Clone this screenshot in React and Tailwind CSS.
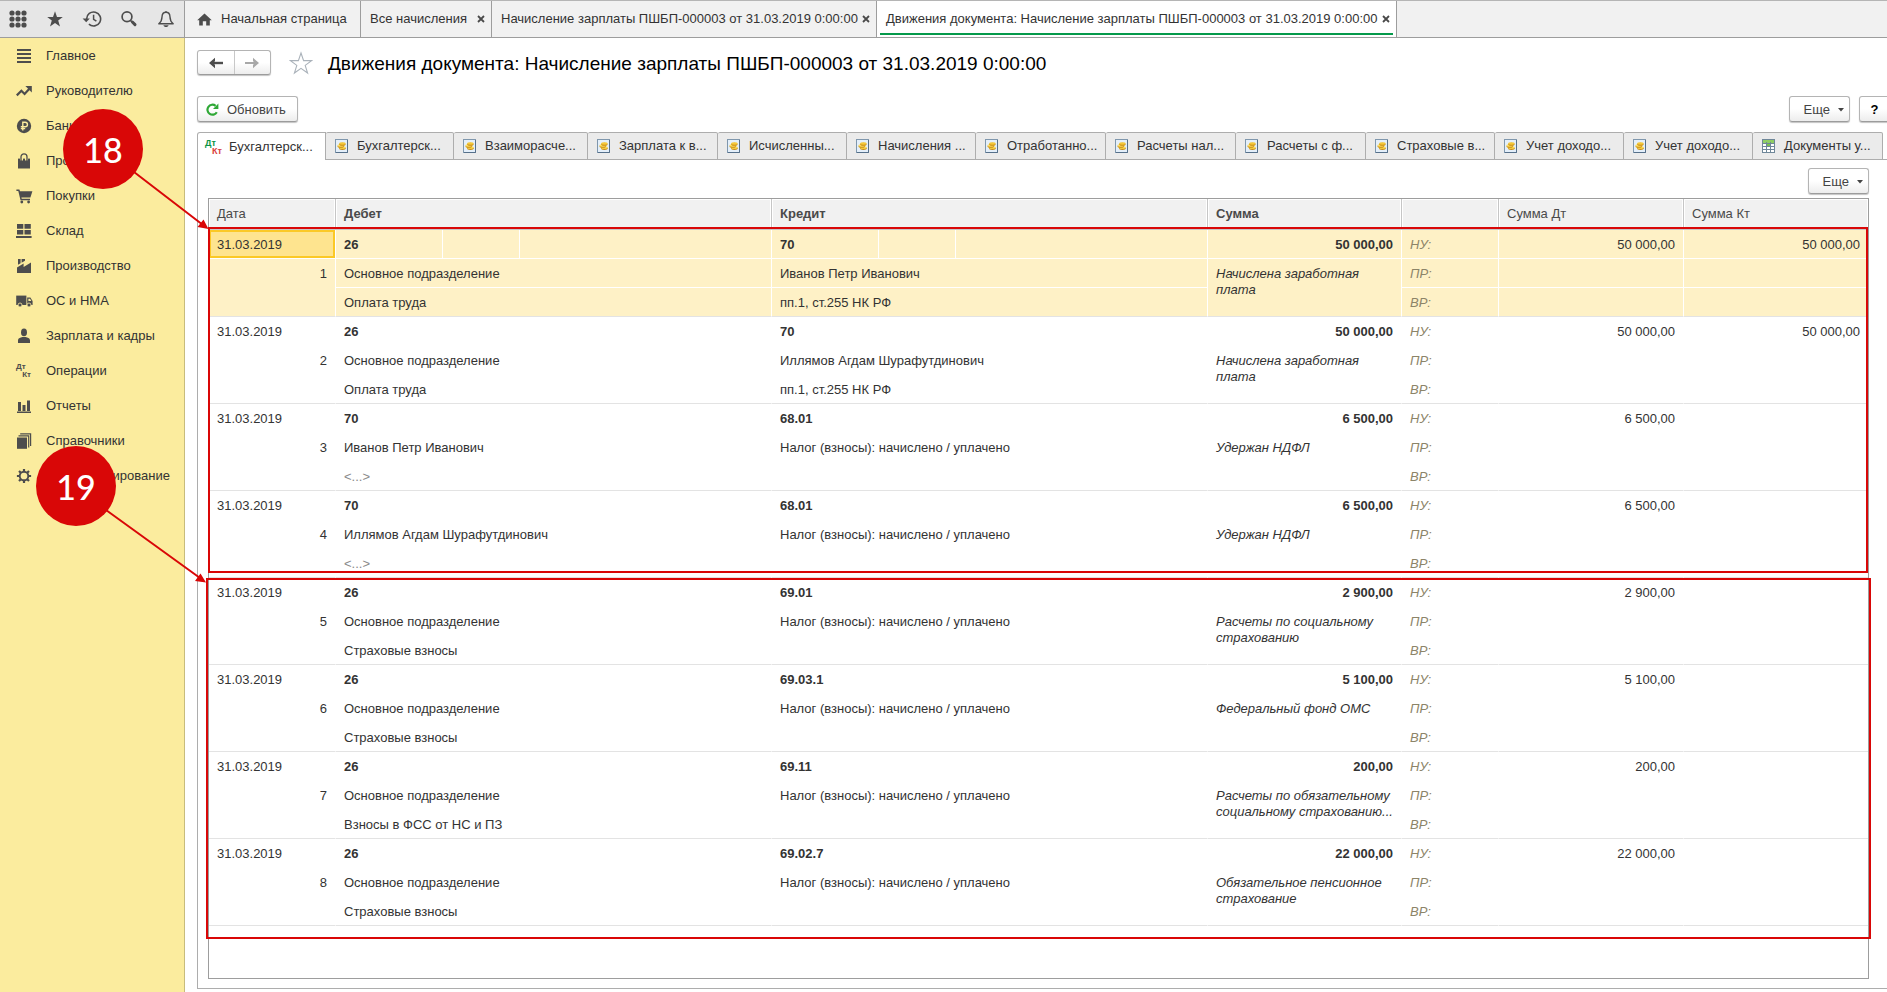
const ink = "#4d4d4d";

function Svg({ w, h, box, className, children }) {
  return (
    <svg
      width={w}
      height={h}
      viewBox={box || `0 0 ${w} ${h}`}
      fill="none"
      aria-hidden="true"
      className={className || "shrink-0"}
    >
      {children}
    </svg>
  );
}

const AppsIcon = () => (
  <Svg w={18} h={18}>
    {[3, 9, 15].map((y) =>
      [3, 9, 15].map((x) => <circle key={`${x}-${y}`} cx={x} cy={y} r="2.6" fill={ink} />)
    )}
  </Svg>
);

const FavoritesIcon = () => (
  <Svg w={18} h={18}>
    <path d="M9 1.2l2 5.7h5.8l-4.6 3.6 1.8 6L9 12.9l-5 3.6 1.8-6L1.2 6.9H7z" fill={ink} />
  </Svg>
);

const HistoryIcon = () => (
  <Svg w={20} h={18}>
    <path d="M4.6 9a7 7 0 1 1 2.3 5.2" stroke={ink} strokeWidth="1.6" />
    <path d="M.6 8.4h7.2L4.2 12.2z" fill={ink} />
    <path d="M11.6 4.8v4.6l2.8 1.8" stroke={ink} strokeWidth="1.5" />
  </Svg>
);

const SearchIcon = () => (
  <Svg w={18} h={18}>
    <circle cx="7" cy="6.8" r="4.9" stroke={ink} strokeWidth="1.7" />
    <path d="M10.4 10.4l1.6 1.6" stroke={ink} strokeWidth="1.5" />
    <path d="M12.400 12l2.600 2.600" stroke={ink} strokeWidth="3" strokeLinecap="round" />
  </Svg>
);

const BellIcon = () => (
  <Svg w={18} h={18}>
    <path
      d="M9 .9v1.4M9 2.2c-2.6 0-3.9 1.9-4 4.800-.1 3.600-1 5-3.200 6.800h14.400c-2.200-1.800-3.100-3.200-3.200-6.800-.1-2.900-1.400-4.800-4-4.800z"
      stroke={ink}
      strokeWidth="1.4"
      strokeLinejoin="round"
    />
    <path d="M6.400 15.200h5.200c-.4 1.200-1.200 1.800-2.600 1.800s-2.200-.6-2.600-1.800z" fill={ink} />
  </Svg>
);

const HomeIcon = () => (
  <Svg w={15} h={13}>
    <path d="M7.500.4L14.800 7.200H12.800V12.600H9.200V8.200H5.800V12.600H2.200V7.200H.2z" fill={ink} />
  </Svg>
);

const navIcons = {
  main: (
    <Svg w={16} h={16}>
      <path d="M1 2h14M1 6h14M1 10h14M1 14h14" stroke={ink} strokeWidth="2" />
    </Svg>
  ),
  trend: (
    <Svg w={16} h={16}>
      <path d="M.8 12.400l4.600-4.600 3.200 3.200 5-5.400" stroke={ink} strokeWidth="2.200" />
      <path d="M9.400 3H15.800V9.400z" fill={ink} />
    </Svg>
  ),
  ruble: (
    <Svg w={16} h={16}>
      <circle cx="8" cy="8" r="7.200" fill={ink} />
      <path d="M6.800 12.600V4.200h2.400a2.200 2.200 0 0 1 0 4.500H4.800M4.800 10.600h4.400" stroke="#fbec9e" strokeWidth="1.400" />
    </Svg>
  ),
  bag: (
    <Svg w={16} h={16}>
      <path d="M2 5.600h12V15.500H2z" fill={ink} />
      <path d="M5.500 7.500V4a2.500 2.500 0 0 1 5 0V7.500" stroke="#fbec9e" strokeWidth="3" />
      <path d="M5 8V3.800a3 3 0 0 1 6 0V8" stroke={ink} strokeWidth="1.300" />
    </Svg>
  ),
  cart: (
    <Svg w={17} h={16}>
      <path d="M.4 1.600H3.400L4 3.200H16.400L14.400 9.400H5.400L5.700 10.800H14V12.300H4.500L2.300 3.100H.4z" fill={ink} />
      <circle cx="5.800" cy="14" r="1.400" fill={ink} />
      <circle cx="12.600" cy="14" r="1.400" fill={ink} />
    </Svg>
  ),
  stock: (
    <Svg w={16} h={16}>
      <path d="M1 1h6.300v4.700H1zM8.500 1h6.300v4.700H8.500zM1 6.900h6.300v4.700H1zM8.500 6.900h6.300v4.700H8.500zM0 12.900h15.600v2H0z" fill={ink} />
    </Svg>
  ),
  factory: (
    <Svg w={16} h={16}>
      <path d="M1 15V9.600L7.600 5.600V9L15 4.600V15z" fill={ink} />
      <path d="M2 1h2.600v4.200L2 6.800zM5.600 1H9V2.800L5.600 4.800z" fill={ink} />
    </Svg>
  ),
  truck: (
    <Svg w={17} h={16}>
      <path d="M.2 2.600H10.400V12H.2z" fill={ink} />
      <path d="M11.200 4.600h3.200l2.200 3.400v4h-5.400z" fill={ink} />
      <path d="M12.400 5.800h1.600l1.300 2.200h-2.900z" fill="#fbec9e" />
      <circle cx="4" cy="12" r="2" fill={ink} stroke="#fbec9e" strokeWidth="0.800" />
      <circle cx="13" cy="12" r="2" fill={ink} stroke="#fbec9e" strokeWidth="0.800" />
    </Svg>
  ),
  person: (
    <Svg w={16} h={16}>
      <ellipse cx="8" cy="4.400" rx="3" ry="3.800" fill={ink} />
      <path d="M2 15v-2.400c0-1.900 1-2.800 2.900-3.200l1.500-.4h3.200l1.500.4c1.900.4 2.900 1.300 2.900 3.200V15z" fill={ink} />
    </Svg>
  ),
  bars: (
    <Svg w={16} h={16}>
      <path d="M2 4h3v9H2zM6.500 7h3v6h-3zM11 2.500h3V13h-3zM1 13.500h14V15H1z" fill={ink} />
    </Svg>
  ),
  books: (
    <Svg w={16} h={16}>
      <path d="M1 4.500h10V15.800H1z" fill={ink} />
      <path d="M2.500 2.800h10.200V14.500M4.200.9h10.400V13" stroke={ink} strokeWidth="1.200" />
    </Svg>
  ),
  gear: (
    <Svg w={16} h={16}>
      <circle cx="8" cy="8" r="4.300" stroke={ink} strokeWidth="1.900" />
      <path
        d="M8 .9v2.600M8 12.500v2.600M.9 8h2.600M12.500 8h2.600M3 3l1.800 1.800M11.200 11.200L13 13M13 3l-1.800 1.800M4.800 11.200L3 13"
        stroke={ink}
        strokeWidth="2.200"
      />
    </Svg>
  ),
};

function DebitCredit({ className, top, bottom }) {
  return (
    <span aria-hidden="true" className={"flex shrink-0 flex-col text-left font-bold " + className}>
      <span className={top}>Дт</span>
      <span className={"self-end " + bottom}>Кт</span>
    </span>
  );
}

navIcons.entries = (
  <DebitCredit className="w-[15px] text-[8px] leading-[8px] text-[#4d4d4d]" top="" bottom="" />
);

const RegisterIcon = () => (
  <Svg w={13} h={14}>
    <rect x=".5" y=".5" width="12" height="13" fill="#e4effa" stroke="#7f97ad" />
    <path d="M12.500 1v12.500H1" stroke="#56708a" />
    <ellipse cx="7.400" cy="9.300" rx="3.400" ry="1.600" fill="#c98a10" />
    <ellipse cx="7.200" cy="8.500" rx="3.400" ry="1.300" fill="#ffdf55" />
    <ellipse cx="5.800" cy="7.300" rx="3.300" ry="1.500" fill="#c98a10" />
    <ellipse cx="5.800" cy="6.500" rx="3.300" ry="1.200" fill="#ffe46a" />
    <ellipse cx="7.400" cy="5.200" rx="3.200" ry="1.500" fill="#c98a10" />
    <ellipse cx="7.400" cy="4.500" rx="3.200" ry="1.200" fill="#f6c93a" />
  </Svg>
);

const SheetIcon = () => (
  <Svg w={13} h={14}>
    <rect x=".5" y=".5" width="12" height="13" fill="#fff" stroke="#6f8799" />
    <path d="M1 1h11v3H1z" fill="#8fce63" />
    <path d="M5 5h3v3H5z" fill="#7cc04f" />
    <path d="M1 4.500h11M1 7.500h11M1 10.500h11M4.500 3v10.500M8.500 3v10.500" stroke="#6f8799" />
  </Svg>
);

const Caret = () => (
  <Svg w={6} h={4}>
    <path d="M0 0h6L3 3.600z" fill="#444" />
  </Svg>
);

const topIcons = [
  ["Меню", AppsIcon],
  ["Избранное", FavoritesIcon],
  ["История", HistoryIcon],
  ["Поиск", SearchIcon],
  ["Уведомления", BellIcon],
];

const sections = [
  ["main", "Главное"],
  ["trend", "Руководителю"],
  ["ruble", "Банк и касса"],
  ["bag", "Продажи"],
  ["cart", "Покупки"],
  ["stock", "Склад"],
  ["factory", "Производство"],
  ["truck", "ОС и НМА"],
  ["person", "Зарплата и кадры"],
  ["entries", "Операции"],
  ["bars", "Отчеты"],
  ["books", "Справочники"],
  ["gear", "Администрирование"],
];

const registers = [
  ["Бухгалтерск...", "w-[128px]"],
  ["Взаиморасче...", "w-[134px]"],
  ["Зарплата к в...", "w-[130px]"],
  ["Исчисленны...", "w-[129px]"],
  ["Начисления ...", "w-[129px]"],
  ["Отработанно...", "w-[130px]"],
  ["Расчеты нал...", "w-[130px]"],
  ["Расчеты с ф...", "w-[130px]"],
  ["Страховые в...", "w-[129px]"],
  ["Учет доходо...", "w-[129px]"],
  ["Учет доходо...", "w-[129px]"],
];

const D = "31.03.2019";
const tax = "Налог (взносы): начислено / уплачено";
const dept = "Основное подразделение";
const entries = [
  { dt: ["26", dept, "Оплата труда"], kt: ["70", "Иванов Петр Иванович", "пп.1, ст.255 НК РФ"], sum: "50 000,00", note: ["Начислена заработная", "плата"], sdt: "50 000,00", skt: "50 000,00" },
  { dt: ["26", dept, "Оплата труда"], kt: ["70", "Иллямов Агдам Шурафутдинович", "пп.1, ст.255 НК РФ"], sum: "50 000,00", note: ["Начислена заработная", "плата"], sdt: "50 000,00", skt: "50 000,00" },
  { dt: ["70", "Иванов Петр Иванович", "<...>"], kt: ["68.01", tax, ""], sum: "6 500,00", note: ["Удержан НДФЛ"], sdt: "6 500,00", skt: "" },
  { dt: ["70", "Иллямов Агдам Шурафутдинович", "<...>"], kt: ["68.01", tax, ""], sum: "6 500,00", note: ["Удержан НДФЛ"], sdt: "6 500,00", skt: "" },
  { dt: ["26", dept, "Страховые взносы"], kt: ["69.01", tax, ""], sum: "2 900,00", note: ["Расчеты по социальному", "страхованию"], sdt: "2 900,00", skt: "" },
  { dt: ["26", dept, "Страховые взносы"], kt: ["69.03.1", tax, ""], sum: "5 100,00", note: ["Федеральный фонд ОМС"], sdt: "5 100,00", skt: "" },
  { dt: ["26", dept, "Взносы в ФСС от НС и ПЗ"], kt: ["69.11", tax, ""], sum: "200,00", note: ["Расчеты по обязательному", "социальному страхованию..."], sdt: "200,00", skt: "" },
  { dt: ["26", dept, "Страховые взносы"], kt: ["69.02.7", tax, ""], sum: "22 000,00", note: ["Обязательное пенсионное", "страхование"], sdt: "22 000,00", skt: "" },
];

const buttonLook =
  "flex shrink-0 items-center rounded-[3px] border border-[#b4b4b4] border-b-[#9c9c9c] bg-linear-to-b from-white from-50% to-[#ededed] shadow-[0_1px_1px_#c4c4c4]";

const cell = "h-[29px] px-2 pt-[7px] align-top leading-4 whitespace-nowrap border-b border-r ";

function Entry({ entry, number }) {
  const selected = number === 1;
  const edge = cell + (selected ? "border-r-white " : "border-r-transparent ");
  const fill = selected ? "bg-[#fef1c6] " : "";
  const innerEdge = edge + (selected ? "border-b-white " : "border-b-transparent ");
  const inner = innerEdge + fill;
  const last = edge + fill + "border-b-[#e3e3e3] ";
  const mark = "italic text-[#8c8468] ";
  const faded = (text) => (text === "<...>" ? "text-[#8a8a8a] " : "");
  return (
    <tbody>
      <tr>
        <td
          className={
            selected
              ? innerEdge + "bg-[#fee48f] shadow-[inset_0_0_0_2px_#fbc926]"
              : inner
          }
        >
          {D}
        </td>
        <td className={inner + "font-bold"}>{entry.dt[0]}</td>
        <td className={inner}></td>
        <td className={inner}></td>
        <td className={inner + "font-bold"}>{entry.kt[0]}</td>
        <td className={inner}></td>
        <td className={inner}></td>
        <td className={inner + "text-right font-bold"}>{entry.sum}</td>
        <td className={inner + mark}>НУ:</td>
        <td className={inner + "text-right"}>{entry.sdt}</td>
        <td className={inner + "border-r-0 text-right"}>{entry.skt}</td>
      </tr>
      <tr>
        <td rowSpan={2} className={last + "text-right"}>{number}</td>
        <td colSpan={3} className={inner}>{entry.dt[1]}</td>
        <td colSpan={3} className={inner}>{entry.kt[1]}</td>
        <td rowSpan={2} className={last + "italic"}>
          {entry.note.map((line) => (
            <span key={line} className="block">{line}</span>
          ))}
        </td>
        <td className={inner + mark}>ПР:</td>
        <td className={inner}></td>
        <td className={inner + "border-r-0"}></td>
      </tr>
      <tr>
        <td colSpan={3} className={last + faded(entry.dt[2])}>{entry.dt[2]}</td>
        <td colSpan={3} className={last}>{entry.kt[2]}</td>
        <td className={last + mark}>ВР:</td>
        <td className={last}></td>
        <td className={last + "border-r-0"}></td>
      </tr>
    </tbody>
  );
}

const headCell =
  "h-[31px] border-b border-r border-b-[#c6c6c6] border-r-[#c6c6c6] bg-[#f1f1f1] px-2 text-left align-middle text-[#4a4a4a] shadow-[inset_0_0_0_1px_white] ";

function Postings() {
  return (
    <div className="relative flex-1 border border-[#9d9d9d]">
      <table className="w-full table-fixed border-separate border-spacing-0">
        <colgroup>
          <col className="w-[127px]" />
          <col className="w-[107px]" />
          <col className="w-[77px]" />
          <col />
          <col className="w-[107px]" />
          <col className="w-[77px]" />
          <col />
          <col className="w-[194px]" />
          <col className="w-[97px]" />
          <col className="w-[185px]" />
          <col className="w-[184px]" />
        </colgroup>
        <thead>
          <tr>
            <th className={headCell + "font-normal"}>Дата</th>
            <th colSpan={3} className={headCell + "font-bold"}>Дебет</th>
            <th colSpan={3} className={headCell + "font-bold"}>Кредит</th>
            <th className={headCell + "font-bold"}>Сумма</th>
            <th className={headCell}></th>
            <th className={headCell + "font-normal"}>Сумма Дт</th>
            <th className={headCell + "border-r-0 font-normal"}>Сумма Кт</th>
          </tr>
        </thead>
        {entries.map((entry, i) => (
          <Entry key={i} entry={entry} number={i + 1} />
        ))}
      </table>
      <div className="pointer-events-none absolute top-[28px] right-0 -left-px h-[346px] border-2 border-[#d90707]" />
      <div className="pointer-events-none absolute top-[379px] -right-[3px] -left-[3px] h-[361px] border-2 border-[#d90707]" />
    </div>
  );
}

function WindowTab({ title, width, active }) {
  return (
    <div
      className={
        "relative flex shrink-0 items-center justify-between border-r border-[#9d9d9d] pr-[6px] pl-[9px] " +
        width +
        (active ? " bg-white" : "")
      }
    >
      <a href="#" className="whitespace-nowrap">{title}</a>
      <button aria-label="Закрыть" className="flex">
        <Svg w={8} h={8}>
          <path d="M1 1l6 6M7 1L1 7" stroke="#4a4a4a" strokeWidth="1.800" />
        </Svg>
      </button>
      {active && <span className="absolute inset-x-[3px] bottom-[2px] h-[2px] bg-[#059a4b]" />}
    </div>
  );
}

function Callout({ label, place }) {
  return (
    <div
      className={
        "absolute flex size-20 items-center justify-center rounded-full bg-[#d90707] pt-[2px] font-[Lato,sans-serif] text-[34px] leading-none font-medium text-white " +
        place
      }
    >
      {label}
    </div>
  );
}

export default function App() {
  return (
    <div className="relative flex min-h-screen flex-col overflow-hidden bg-white font-['Liberation_Sans',Arial,sans-serif] text-[13px] leading-4 text-[#333]">
      <header className="flex h-[38px] border-t border-b border-t-[#b5b5b5] border-b-[#9d9d9d] bg-[#f1f1f1]">
        <div className="flex w-[185px] shrink-0 border-r border-[#9d9d9d] bg-[#e6e6e6]">
          {topIcons.map(([label, Icon]) => (
            <button key={label} aria-label={label} className="flex flex-1 items-center justify-center">
              <Icon />
            </button>
          ))}
        </div>
        <a href="#" className="flex w-[176px] shrink-0 items-center gap-[9px] border-r border-[#9d9d9d] pl-3 whitespace-nowrap">
          <HomeIcon />
          Начальная страница
        </a>
        <WindowTab title="Все начисления" width="w-[131px]" />
        <WindowTab title="Начисление зарплаты ПШБП-000003 от 31.03.2019 0:00:00" width="w-[385px]" />
        <WindowTab active title="Движения документа: Начисление зарплаты ПШБП-000003 от 31.03.2019 0:00:00" width="w-[520px]" />
      </header>

      <div className="flex flex-1">
        <nav className="w-[185px] shrink-0 border-r border-[#c8bc7c] bg-[#fbec9e]">
          {sections.map(([icon, label]) => (
            <a key={label} href="#" className="flex h-[35px] items-center pl-4">
              <span className="flex w-[30px] shrink-0">{navIcons[icon]}</span>
              {label}
            </a>
          ))}
        </nav>

        <main className="flex min-w-0 flex-1 flex-col pt-3 pb-[3px] pl-3">
          <div className="flex h-[25px] items-center">
            <div className={buttonLook + " h-[25px] w-[74px]"}>
              <button aria-label="Назад" className="flex h-full flex-1 items-center justify-center border-r border-[#c8c8c8]">
                <Svg w={14} h={12}>
                  <path d="M14 6H4" stroke="#4d4d4d" strokeWidth="2.400" />
                  <path d="M0 6L6 .8V4L4.500 6 6 8v3.200z" fill="#4d4d4d" />
                </Svg>
              </button>
              <button aria-label="Вперед" className="flex h-full flex-1 items-center justify-center">
                <Svg w={14} h={12}>
                  <path d="M0 6h10" stroke="#a8a8a8" strokeWidth="2" />
                  <path d="M14 6L8 .8V4l1.500 2L8 8v3.200z" fill="#a8a8a8" />
                </Svg>
              </button>
            </div>
            <button aria-label="В избранное" className="ml-[18px] flex">
              <Svg w={24} h={24}>
                <path
                  d="M12 2l2.600 7.600h8L16.200 14.400l2.400 7.600L12 17.400 5.400 22l2.400-7.600L1.400 9.600h8z"
                  stroke="#aab2ba"
                  strokeWidth="1.100"
                />
              </Svg>
            </button>
            <h1 className="ml-[15px] pt-[2px] text-[19px] leading-6 whitespace-nowrap text-black">
              Движения документа: Начисление зарплаты ПШБП-000003 от 31.03.2019 0:00:00
            </h1>
          </div>

          <div className="-mr-[3px] mt-[21px] flex gap-[9px]">
            <button className={buttonLook + " mr-auto h-[26px] w-[101px] gap-2 pt-px pl-2 text-[#444]"}>
              <Svg w={13} h={13}>
                <path d="M10.800 9.200A5 5 0 1 1 9.600 2.800" stroke="#2fa836" strokeWidth="2.200" />
                <path d="M12.400.6V6H7z" fill="#2fa836" />
              </Svg>
              Обновить
            </button>
            <button className={buttonLook + " h-[26px] w-[61px] justify-end gap-2 pt-px pr-[5px] text-[#444]"}>
              Еще
              <Caret />
            </button>
            <button className={buttonLook + " h-[26px] w-[31px] justify-center pt-px font-bold text-black"}>?</button>
          </div>

          <div role="tablist" className="mt-[10px] flex h-7">
            <button role="tab" aria-selected="true" className="flex w-[129px] items-center gap-[7px] rounded-tl-[3px] border-t border-r border-l border-[#adadad] pl-[7px] whitespace-nowrap">
              <DebitCredit className="w-[17px] text-[9px] leading-[8px]" top="text-[#0b9444]" bottom="text-[#d9403c]" />
              Бухгалтерск...
            </button>
            {registers.map(([label, width], i) => (
              <button
                key={i}
                role="tab"
                aria-selected="false"
                className={
                  "flex items-center gap-[9px] rounded-t-[2px] border-t border-r border-b border-[#adadad] bg-[#ebebeb] pl-[9px] whitespace-nowrap " +
                  width
                }
              >
                <RegisterIcon />
                {label}
              </button>
            ))}
            <button
              role="tab"
              aria-selected="false"
              className="flex w-[130px] items-center gap-[9px] rounded-t-[2px] border-t border-r border-b border-[#adadad] bg-[#ebebeb] pl-[9px] whitespace-nowrap"
            >
              <SheetIcon />
              Документы у...
            </button>
            <span className="flex-1 border-b border-[#adadad]" />
          </div>

          <section className="flex flex-1 flex-col border-b border-l border-[#adadad] pt-2 pr-[18px] pb-[9px] pl-[10px]">
            <button className={buttonLook + " mb-1 h-[26px] w-[61px] justify-end gap-2 self-end pt-px pr-[5px] text-[#444]"}>
              Еще
              <Caret />
            </button>
            <Postings />
          </section>
        </main>
      </div>

      <svg width="220" height="600" fill="none" aria-hidden="true" className="pointer-events-none absolute top-0 left-0">
        <path d="M134 172L203 225M106 510L200 578" stroke="#d90707" strokeWidth="2" />
        <path d="M208.500 229L197.500 227 203.500 219.500zM206 582.500L195 581 200.500 573.500z" fill="#d90707" />
      </svg>
      <Callout label="18" place="top-[109px] left-[63px]" />
      <Callout label="19" place="top-[446px] left-[36px]" />
    </div>
  );
}
